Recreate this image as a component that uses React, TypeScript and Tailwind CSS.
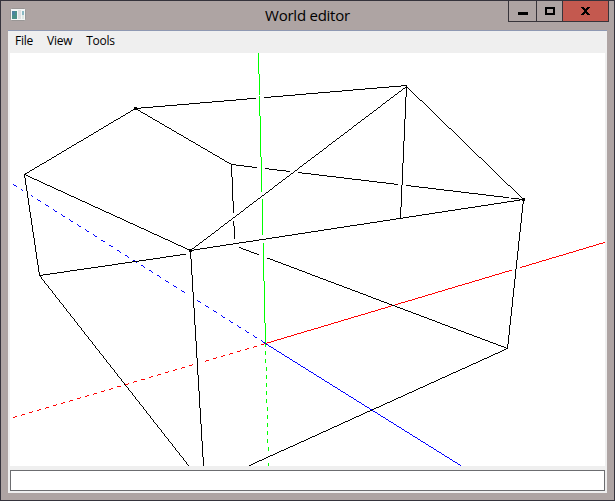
import React from "react";

type Point = [number, number];

type Segment = { from: Point; to: Point; color?: string; dashed?: boolean; gaps?: Point[] };

const BLACK = "#000000";
const RED = "#ff0000";
const GREEN = "#00ff00";
const BLUE = "#0000ff";

const segments: Segment[] = [
  { from: [258, 53], to: [265, 343], color: GREEN, gaps: [[95, 95], [192, 198], [235, 242]] },
  { from: [265, 343], to: [268, 465], color: GREEN, dashed: true, gaps: [[453, 461]] },
  { from: [265, 343], to: [604, 242], color: RED, gaps: [[512, 519]] },
  { from: [13, 417], to: [265, 343], color: RED, dashed: true, gaps: [[194, 201]] },
  { from: [13, 184], to: [265, 343], color: BLUE, dashed: true, gaps: [[23, 30], [188, 196]] },
  { from: [265, 343], to: [460, 465], color: BLUE },
  { from: [135, 108], to: [406, 85], gaps: [[256, 263]] },
  { from: [24, 174], to: [135, 108] },
  { from: [135, 108], to: [231, 164] },
  { from: [24, 174], to: [190, 250] },
  { from: [24, 174], to: [39, 275] },
  { from: [39, 275], to: [190, 253], gaps: [[186, 190]] },
  { from: [39, 275], to: [188, 465] },
  { from: [190, 250], to: [406, 86] },
  { from: [190, 250], to: [203, 465] },
  { from: [190, 250], to: [523, 199] },
  { from: [406, 86], to: [400, 217] },
  { from: [406, 86], to: [523, 199] },
  { from: [231, 164], to: [523, 199], gaps: [[257, 264], [290, 297], [398, 405], [509, 510]] },
  { from: [231, 164], to: [234, 238], gaps: [[213, 220]] },
  { from: [239, 247], to: [507, 348], gaps: [[259, 266]] },
  { from: [523, 199], to: [507, 348] },
  { from: [249, 465], to: [507, 348] },
];

const vertices: Point[] = [[134, 107], [189, 249], [522, 198]];

function rasterize({ from, to, dashed, gaps = [] }: Segment) {
  const dx = to[0] - from[0];
  const dy = to[1] - from[1];
  const steps = Math.max(Math.abs(dx), Math.abs(dy));
  const major = Math.abs(dx) >= Math.abs(dy) ? 0 : 1;
  let d = "";
  for (let i = 0; i <= steps; i++) {
    if (dashed && i % 8 >= 4) continue;
    const p = [Math.round(from[0] + (dx * i) / steps), Math.round(from[1] + (dy * i) / steps)];
    if (gaps.some(([a, b]) => p[major] >= a && p[major] <= b)) continue;
    d += `M${p[0]} ${p[1]}h1v1h-1z`;
  }
  return d;
}

function Scene() {
  return (
    <svg className="block h-[413px] w-full bg-white" viewBox="10 53 595 413" shapeRendering="crispEdges">
      {segments.map((s, i) => (
        <path key={i} d={rasterize(s)} fill={s.color ?? BLACK} />
      ))}
      {vertices.map(([x, y]) => (
        <rect key={x} x={x} y={y} width="3" height="3" />
      ))}
    </svg>
  );
}

function AppIcon() {
  return (
    <svg className="block h-[14px] w-4" viewBox="0 0 16 14">
      <rect x="0.5" y="0.5" width="15" height="12" rx="1" fill="#f4f6f6" stroke="#999695" />
      <rect x="2" y="3" width="5" height="8" fill="#4a9088" />
      <rect x="2" y="3" width="3" height="4" fill="#4b83a0" />
      <rect x="8" y="2" width="3" height="9" fill="#dcdfe0" />
      <rect x="12" y="3" width="2" height="4" fill="#8ab9c4" />
      <rect x="12" y="7" width="2" height="4" fill="#dfe7e3" />
    </svg>
  );
}

function WindowButtons() {
  return (
    <div className="flex h-[21px] w-[101px] border-x border-b border-[#37343a]">
      <button className="flex w-[28px] justify-center border-r border-[#37343a] pt-[11px]" aria-label="Minimize">
        <span className="h-[3px] w-[10px] bg-black" />
      </button>
      <button className="flex w-[26px] justify-center border-r border-[#37343a] pt-[6px]" aria-label="Maximize">
        <span className="h-[8px] w-[10px] border-2 border-black" />
      </button>
      <button className="flex flex-1 justify-center bg-[#c4594f] pt-[6px]" aria-label="Close">
        <svg className="h-[8px] w-[9px]" viewBox="0 0 9 8" shapeRendering="crispEdges">
          <path d="M0 0h3v1h1v1h1v-1h1v-1h3v1h-1v1h-1v1h-1v2h1v1h1v1h1v1h-3v-1h-1v-1h-1v1h-1v1h-3v-1h1v-1h1v-1h1v-2h-1v-1h-1v-1h-1z" />
        </svg>
      </button>
    </div>
  );
}

export default function App() {
  return (
    <div className="flex h-[501px] w-[615px] flex-col border border-[#35333c] bg-[#aea4a3] px-[7px] pb-[7px] font-['Open_Sans','Noto_Sans',sans-serif] text-black">
      <header className="-mr-[2px] grid h-[29px] grid-cols-[99px_1fr_101px] items-start">
        <div className="pt-[7px] pl-[2px]"><AppIcon /></div>
        <h1 className="pt-[4px] text-center text-[15px] leading-[21px] tracking-[-0.25px]">World editor</h1>
        <WindowButtons />
      </header>
      <main className="flex w-[599px] flex-1 flex-col border-t border-[#8f99b3] bg-[#efefef] px-[2px]">
        <nav className="flex h-[22px] items-start gap-[14px] pt-[1px] pl-[5px] text-[12px] leading-[18px] tracking-[-0.25px]">
          <span>File</span>
          <span>View</span>
          <span>Tools</span>
        </nav>
        <Scene />
        <input className="mt-[4px] block h-[21px] w-full border border-[#6c6d70] bg-white px-1 text-xs outline-none" aria-label="Command" />
      </main>
    </div>
  );
}
